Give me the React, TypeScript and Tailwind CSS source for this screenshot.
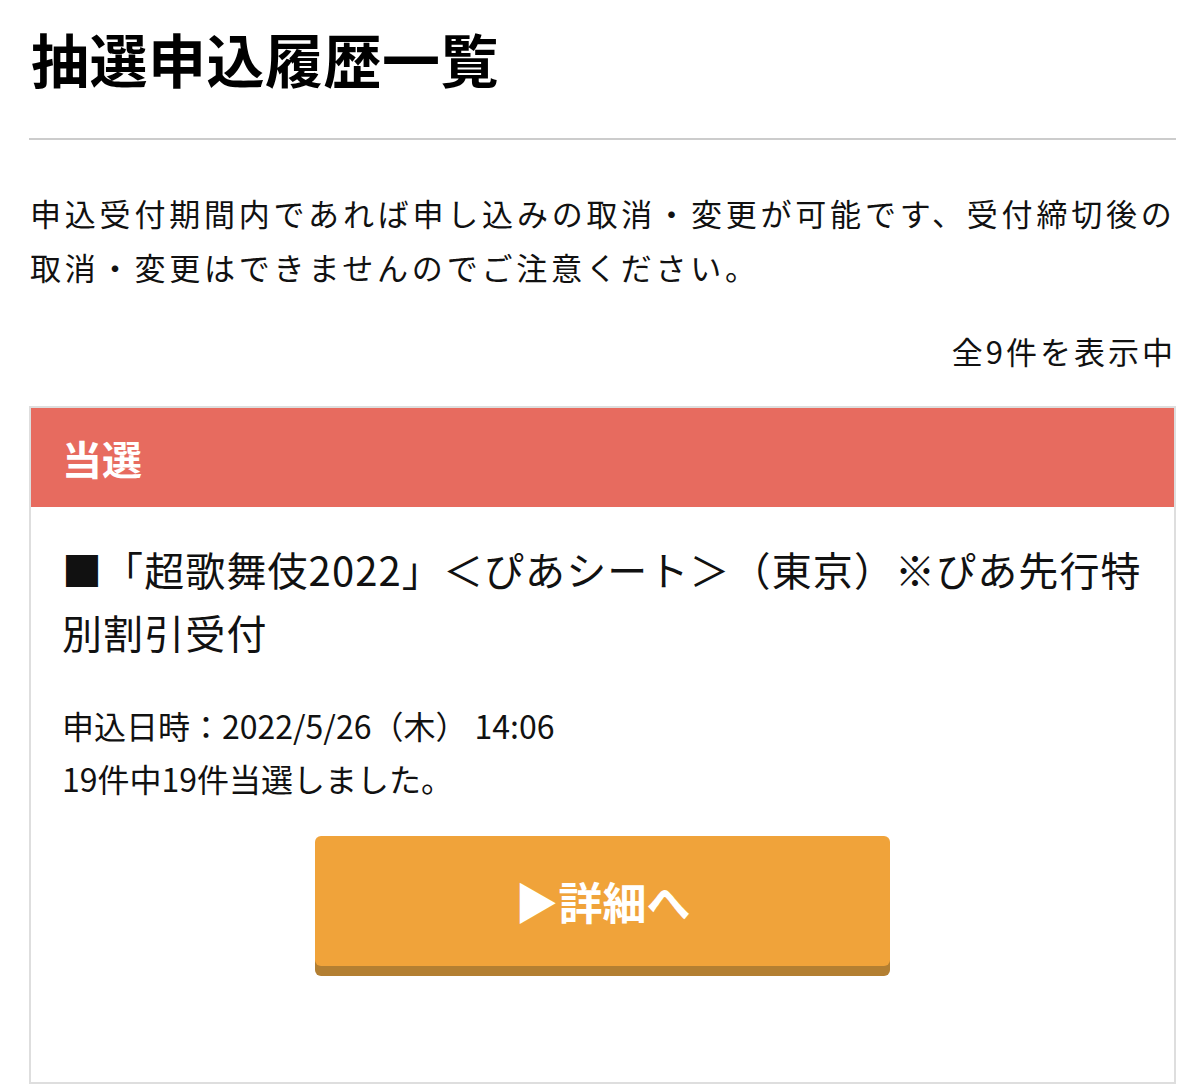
const font = '[font-family:"Noto_Sans_CJK_JP","Noto_Sans",sans-serif]';

function ResultCard() {
  return (
    <div className="border-2 border-[#dedede] bg-white">
      {/* Status header */}
      <div className="bg-[#e76b5f] h-[99px] flex items-center px-[31px]">
        <span className="text-white text-[40px] font-bold leading-none">当選</span>
      </div>

      {/* Body */}
      <div className="px-[31px] pt-[31px] pb-[116px]">
        <p className="text-[40px] tracking-[1.1px] leading-[63px] text-[#111]">
          ■「超歌舞伎2022」＜ぴあシート＞（東京）※ぴあ先行特別割引受付
        </p>
        <div className="mt-[35px] text-[32px] leading-[53px] text-[#111]">
          <p>申込日時：2022/5/26（木） 14:06</p>
          <p>19件中19件当選しました。</p>
        </div>
        <div className="mt-[31px] flex justify-center">
          <button className="w-[575px] h-[130px] rounded-[6px] bg-[#f0a33a] shadow-[0_10px_0_#b37f32] flex items-center justify-center text-white text-[44px] font-bold">
            ▶詳細へ
          </button>
        </div>
      </div>
    </div>
  );
}

export default function App() {
  return (
    <div className={`bg-white min-h-[1090px] pl-[29px] pr-[24px] pt-[23px] ${font}`}>
      <h1 className="text-[58px] leading-[70px] font-bold text-black pl-[2px] tracking-[0.5px]">抽選申込履歴一覧</h1>
      <hr className="mt-[45px] border-0 h-[2px] bg-[#cccccc]" />

      <p className="mt-[46px] text-[31px] tracking-[3.8px] leading-[54px] text-[#111] pl-[1px]">
        申込受付期間内であれば申し込みの取消・変更が可能です、受付締切後の取消・変更はできませんのでご注意ください。
      </p>
      <p className="mt-[30px] text-right text-[31px] tracking-[3px] leading-[54px] text-[#111]">全9件を表示中</p>

      <div className="mt-[28px]">
        <ResultCard />
      </div>
    </div>
  );
}
